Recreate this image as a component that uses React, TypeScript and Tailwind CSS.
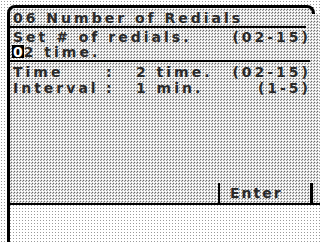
import React from "react";

const dotsDark = "bg-[radial-gradient(circle,#6b6b6b_0.7px,transparent_1.1px)] bg-size-[3px_3px]";
const dotsLight = "bg-[radial-gradient(circle,#9a9a9a_0.6px,transparent_1px)] bg-size-[3px_3px]";

export default function App() {
  return (
    <div
      className={`w-[320px] h-[242px] overflow-hidden bg-white flex flex-col pt-[5px] pl-[7px] text-[#2a2a2a] font-['DejaVu_Sans',sans-serif] font-bold text-[14px] leading-[15px] tracking-[3px] ${dotsLight}`}
    >
      {/* top cap of the frame */}
      <div className={`h-[9px] w-[308px] border-t-[3px] border-x-[3px] border-black rounded-t-[8px] ${dotsDark}`} />
      <div className="flex-1 flex flex-col border-l-[3px] border-black">
        <div className={`h-[189px] flex flex-col ${dotsDark}`}>
          <div className="mt-[-3px] pl-[3px] h-[15px] whitespace-pre">06 Number of Redials</div>
          <div className="h-[2px] w-[296px] bg-black" />
          <div className="mt-[2px] pl-[3px] w-[301px] h-[15px] flex justify-between whitespace-pre">
            <span>Set # of redials.</span>
            <span>(02-15)</span>
          </div>
          <div className="pl-[2px] h-[15px] whitespace-pre">
            <span className="bg-black text-white pl-[1px] tracking-[1px] inline-block h-[13px]">0</span>
            <span>2 time.</span>
          </div>
          <div className="h-[2px] w-[300px] bg-black" />
          <div className="mt-[3px] pl-[3px] w-[301px] h-[15px] flex whitespace-pre">
            <span className="w-[93px]">Time</span>
            <span className="w-[30px]">:</span>
            <span>2 time.</span>
            <span className="ml-auto">(02-15)</span>
          </div>
          <div className="mt-[1px] pl-[3px] w-[301px] h-[15px] flex whitespace-pre">
            <span className="w-[93px]">Interval</span>
            <span className="w-[30px]">:</span>
            <span>1 min.</span>
            <span className="ml-auto">(1-5)</span>
          </div>
          <div className="mt-auto flex h-[20px] pl-[208px]">
            <div className="w-[2px] h-full bg-black" />
            <div className="w-[90px] pl-[10px] pt-[3px] whitespace-pre tracking-[2px]">Enter</div>
            <div className="w-[3px] h-full bg-black" />
          </div>
        </div>
        <div className="h-[2px] bg-black" />
        <div className="flex-1" />
      </div>
    </div>
  );
}
